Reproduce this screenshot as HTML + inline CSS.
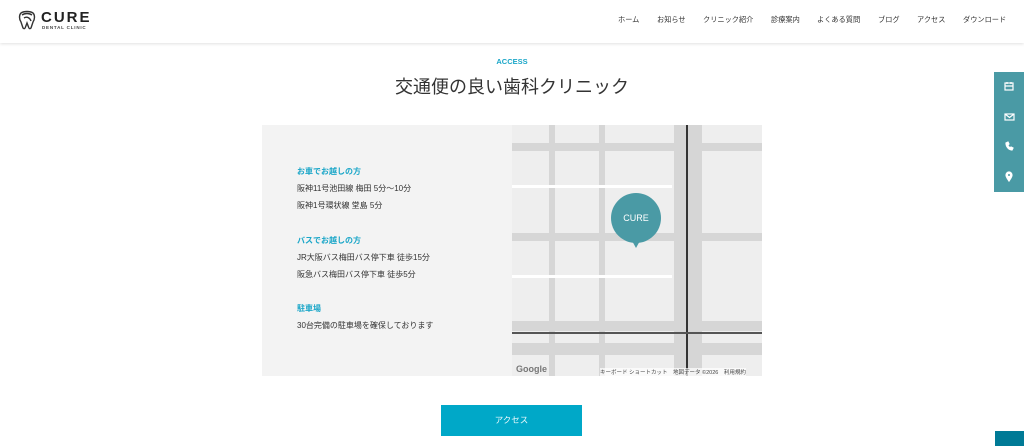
<!DOCTYPE html>
<html><head><meta charset="utf-8"><style>
*{margin:0;padding:0;box-sizing:border-box}
body{width:1024px;height:446px;overflow:hidden;background:#fff;font-family:"Liberation Sans","Noto Sans CJK JP",sans-serif;color:#333;position:relative}
.hdr{position:absolute;left:0;top:0;width:1024px;height:43px;background:#fff;box-shadow:0 1px 3px rgba(0,0,0,.12);z-index:2}
.logo{position:absolute;left:18px;top:10px}
.logo b{position:absolute;left:23px;top:-1px;font-size:15px;letter-spacing:2px;font-weight:900;color:#222}
.logo i{position:absolute;left:24px;top:15px;font-size:4.5px;letter-spacing:.8px;font-style:normal;font-weight:bold;white-space:nowrap;color:#444}
nav{position:absolute;top:15px;font-size:7.2px;color:#333}
nav span{position:absolute;white-space:nowrap}
.eye{position:absolute;top:57px;left:0;width:1024px;text-align:center;font-size:7.5px;font-weight:bold;color:#1aa6c8}
h1{position:absolute;top:73px;left:0;width:1024px;text-align:center;font-size:18px;font-weight:normal;color:#333}
.info{position:absolute;left:262px;top:125px;width:250px;height:251px;background:#f3f3f3;font-size:8px}
.info p{position:absolute;left:35px;white-space:nowrap}
.info .h{color:#1aa6c8;font-weight:bold}
.map{position:absolute;left:512px;top:125px;width:250px;height:251px;background:#eeeeee;overflow:hidden}
.r{position:absolute;background:#fff}
.g{position:absolute;background:#d6d6d6}
.side{position:absolute;left:994px;top:72px;width:30px;height:120px;background:#4a9aa5}
.btn{position:absolute;left:441px;top:405px;width:141px;height:31px;background:#00a8c8;color:#e8f8fb;font-size:8.5px;text-align:center;line-height:31px}
</style></head><body>
<div class="hdr">
<div class="logo"><svg width="18" height="20" viewBox="0 0 18 20"><path d="M3 3C6 1 12 1 15 3C17 5 17 9 15 12L13 18C12 19 11 19 10.5 17L9 13L7.5 17C7 19 6 19 5 18L3 12C1 9 1 5 3 3Z M4 5C7 3 11 3 14 5 M6 8C9 6 12 8 13 11" fill="none" stroke="#333" stroke-width="1.4"/></svg><b>CURE</b><i>DENTAL CLINIC</i></div>
<nav><span style="left:618px">ホーム</span><span style="left:657px">お知らせ</span><span style="left:703px">クリニック紹介</span><span style="left:771px">診療案内</span><span style="left:817px">よくある質問</span><span style="left:878px">ブログ</span><span style="left:917px">アクセス</span><span style="left:963px">ダウンロード</span></nav>
</div>
<div class="eye">ACCESS</div>
<h1>交通便の良い歯科クリニック</h1>
<div class="info">
<p class="h" style="top:41px">お車でお越しの方</p>
<p style="top:58px">阪神11号池田線 梅田 5分〜10分</p>
<p style="top:75px">阪神1号環状線 堂島 5分</p>
<p class="h" style="top:110px">バスでお越しの方</p>
<p style="top:127px">JR大阪バス梅田バス停下車 徒歩15分</p>
<p style="top:144px">阪急バス梅田バス停下車 徒歩5分</p>
<p class="h" style="top:178px">駐車場</p>
<p style="top:195px">30台完備の駐車場を確保しております</p>
</div>
<div class="map">
<div class="g" style="left:0;top:18px;width:250px;height:8px"></div>
<div class="g" style="left:0;top:108px;width:250px;height:8px"></div>
<div class="g" style="left:0;top:196px;width:250px;height:10px"></div>
<div class="g" style="left:0;top:218px;width:250px;height:12px"></div>
<div class="g" style="left:162px;top:0;width:28px;height:251px"></div>
<div class="g" style="left:37px;top:0;width:6px;height:251px"></div>
<div class="g" style="left:87px;top:0;width:6px;height:251px"></div>
<div class="r" style="left:0;top:60px;width:160px;height:3px"></div>
<div class="r" style="left:0;top:150px;width:160px;height:3px"></div>
<div style="position:absolute;left:174px;top:0;width:2px;height:251px;background:#333"></div>
<div style="position:absolute;left:0;top:207px;width:250px;height:2px;background:#555"></div>
<div style="position:absolute;left:99px;top:68px;width:50px;height:50px;border-radius:50%;background:#4a9aa5;color:#fff;font-size:9px;text-align:center;line-height:50px">CURE</div>
<div style="position:absolute;left:119px;top:114px;width:0;height:0;border-left:5px solid transparent;border-right:5px solid transparent;border-top:9px solid #4a9aa5"></div>
<div style="position:absolute;left:4px;top:239px;font-size:9px;color:#777;font-weight:bold">Google</div>
<div style="position:absolute;left:88px;top:243px;font-size:5.5px;color:#444;white-space:nowrap;background:rgba(255,255,255,.7)">キーボード ショートカット　地図データ ©2026　利用規約</div>
</div>
<div class="side">
<svg width="30" height="120" viewBox="0 0 30 120" fill="none" stroke="#fff" stroke-width="1.2"><rect x="11" y="11" width="8" height="7"/><path d="M11 14h8M13 10v2M17 10v2"/><rect x="11" y="42" width="9" height="6"/><path d="M11 42l4.5 3.5L20 42"/><path d="M12 71c0 4 3 7 6 7l1-2-2-1-1 1c-1-1-2-2-2-3l1-1-1-2z" fill="#fff"/><path d="M15 109c-2-3-3-4-3-6a3 3 0 0 1 6 0c0 2-1 3-3 6z" fill="#fff"/><circle cx="15" cy="103" r="1" fill="#4a9aa5" stroke="none"/></svg>
</div>
<div class="btn">アクセス</div>
<div style="position:absolute;left:995px;top:431px;width:29px;height:15px;background:#007a96"></div>
</body></html>
